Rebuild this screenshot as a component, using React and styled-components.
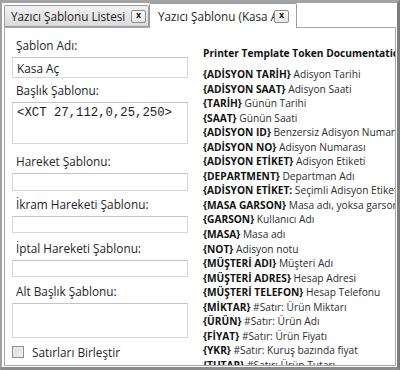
import React from "react";
import styled, { createGlobalStyle } from "styled-components";

const Global = createGlobalStyle`
  html, body { margin: 0; padding: 0; background: #fff; }
  body { font-family: "Open Sans", "Noto Sans", sans-serif; }
  * { box-sizing: border-box; }
`;

const Frame = styled.div`
  width: 400px;
  height: 370px;
  background: #fff;
  border-style: solid;
  border-color: #a4a4a4 #7c7c7c #8c8c8c #a0a0a0;
  border-width: 3px 3px 3px 2px;
  display: flex;
  flex-direction: column;
  overflow: hidden;
`;

const TabStrip = styled.div`
  height: 25px;
  flex: none;
  display: flex;
  align-items: flex-end;
  padding-left: 2px;
  border-bottom: 1px solid #a9a9a9;
  margin: 0 1px 0 2px;
`;

const Tab = styled.div`
  height: ${(p) => (p.$active ? 25 : 22)}px;
  width: ${(p) => p.$w}px;
  margin-bottom: ${(p) => (p.$active ? -1 : 0)}px;
  margin-left: ${(p) => (p.$active ? 0 : -2)}px;
  display: flex;
  align-items: center;
  padding: 0 ${(p) => (p.$active ? 7 : 2)}px 0 ${(p) => (p.$active ? 8 : 6)}px;
  border: 1px solid #9a9ca3;
  border-bottom: ${(p) => (p.$active ? "none" : "1px solid #9a9ca3")};
  background: ${(p) =>
    p.$active ? "#fff" : "linear-gradient(#f2f2f2, #e6e6e6 50%, #dadada)"};
  border-radius: 2px 2px 0 0;
  overflow: hidden;
`;

const TabText = styled.span`
  font-size: 11.7px;
  color: #1e1e1e;
  white-space: nowrap;
  overflow: hidden;
  flex: 1;
  min-width: 0;
`;

const CloseBox = styled.span`
  flex: none;
  width: 15px;
  height: 13px;
  margin-left: ${(p) => p.$ml || 0}px;
  border: 1px solid #8e8e8e;
  border-radius: 2px;
  background: linear-gradient(#fdfdfd, #e4e4e4);
  display: flex;
  align-items: center;
  justify-content: center;
  font-family: "DejaVu Sans", sans-serif;
  font-weight: bold;
  font-size: 8px;
  color: #222;
  line-height: 1;
`;

const Body = styled.div`
  flex: 1;
  min-height: 0;
  margin: 0 1px 1px 2px;
  border: 1px solid #a9a9a9;
  border-top: none;
  display: grid;
  grid-template-columns: 196px 1fr;
  overflow: hidden;
`;

const LeftCol = styled.div`
  padding: 9px 13px 0 7px;
  display: flex;
  flex-direction: column;
`;

const Label = styled.div`
  height: 16px;
  line-height: 16px;
  font-size: 11.8px;
  color: #262626;
  padding-left: 4px;
  margin-top: ${(p) => p.$mt || 0}px;
  margin-bottom: 4px;
  white-space: nowrap;
`;

const Box = styled.div`
  height: ${(p) => p.$h}px;
  width: 176px;
  border: 1px solid #d4d8de;
  border-top-color: #c2c4ca;
  background: #fff;
  padding: ${(p) => (p.$multi ? "3px 4px" : "0 4px")};
  display: flex;
  align-items: ${(p) => (p.$multi ? "flex-start" : "center")};
  font-size: 11.8px;
  color: #222;
  white-space: nowrap;
`;

const Mono = styled.span`
  font-family: "Liberation Mono", "DejaVu Sans Mono", monospace;
  font-size: 12.3px;
  color: #222;
`;

const CheckRow = styled.div`
  margin-top: 6px;
  display: flex;
  align-items: center;
  gap: 8px;
  font-size: 11.8px;
  color: #262626;
`;

const CheckBoxSq = styled.span`
  width: 12px;
  height: 12px;
  border: 1px solid #8f8f8f;
  background: linear-gradient(135deg, #d4d4d4, #f4f4f4);
  box-shadow: inset 0 0 0 2px #e9e9e9;
`;

const RightCol = styled.div`
  padding: 18px 0 0 2px;
  overflow: hidden;
  white-space: nowrap;
  font-size: 10.2px;
  color: #2d2d2d;
`;

const DocTitle = styled.div`
  font-weight: 700;
  color: #111;
  line-height: 15px;
  margin-bottom: 6px;
`;

const DocLine = styled.div`
  line-height: 14.55px;
  height: 14.55px;
`;

const Token = styled.span`
  font-weight: 700;
  color: #111;
`;

const fields = [
  { label: "Şablon Adı:", mt: 0, h: 21, value: "Kasa Aç" },
  { label: "Başlık Şablonu:", mt: 4, h: 42, multi: true, mono: "<XCT 27,112,0,25,250>" },
  { label: "Hareket Şablonu:", mt: 9, h: 18 },
  { label: "İkram Hareketi Şablonu:", mt: 5, h: 17 },
  { label: "İptal Hareketi Şablonu:", mt: 7, h: 17 },
  { label: "Alt Başlık Şablonu:", mt: 6, h: 35, multi: true },
];

const docs = [
  ["{ADİSYON TARİH}", " Adisyon Tarihi"],
  ["{ADİSYON SAAT}", " Adisyon Saati"],
  ["{TARİH}", " Günün Tarihi"],
  ["{SAAT}", " Günün Saati"],
  ["{ADİSYON ID}", " Benzersiz Adisyon Numarası"],
  ["{ADİSYON NO}", " Adisyon Numarası"],
  ["{ADİSYON ETİKET}", " Adisyon Etiketi"],
  ["{DEPARTMENT}", " Departman Adı"],
  ["{ADİSYON ETİKET:", " Seçimli Adisyon Etiketi"],
  ["{MASA GARSON}", " Masa adı, yoksa garson adı"],
  ["{GARSON}", " Kullanıcı Adı"],
  ["{MASA}", " Masa adı"],
  ["{NOT}", " Adisyon notu"],
  ["{MÜŞTERİ ADI}", " Müşteri Adı"],
  ["{MÜŞTERİ ADRES}", " Hesap Adresi"],
  ["{MÜŞTERİ TELEFON}", " Hesap Telefonu"],
  ["{MİKTAR}", " #Satır: Ürün Miktarı"],
  ["{ÜRÜN}", " #Satır: Ürün Adı"],
  ["{FİYAT}", " #Satır: Ürün Fiyatı"],
  ["{YKR}", " #Satır: Kuruş bazında fiyat"],
  ["{TUTAR}", " #Satır: Ürün Tutarı"],
];

export default function App() {
  return (
    <>
      <Global />
      <Frame>
        <TabStrip>
          <Tab $w={145}>
            <TabText>Yazıcı Şablonu Listesi</TabText>
            <CloseBox>x</CloseBox>
          </Tab>
          <Tab $active $w={148}>
            <TabText>Yazıcı Şablonu (Kasa Aç)</TabText>
            <CloseBox $ml={-2}>x</CloseBox>
          </Tab>
        </TabStrip>
        <Body>
          <LeftCol>
            {fields.map((f) => (
              <React.Fragment key={f.label}>
                <Label $mt={f.mt}>{f.label}</Label>
                <Box $h={f.h} $multi={f.multi}>
                  {f.mono ? <Mono>{f.mono}</Mono> : f.value}
                </Box>
              </React.Fragment>
            ))}
            <CheckRow>
              <CheckBoxSq />
              Satırları Birleştir
            </CheckRow>
          </LeftCol>
          <RightCol>
            <DocTitle>Printer Template Token Documentation</DocTitle>
            {docs.map(([t, d]) => (
              <DocLine key={t + d}>
                <Token>{t}</Token>
                {d}
              </DocLine>
            ))}
          </RightCol>
        </Body>
      </Frame>
    </>
  );
}
